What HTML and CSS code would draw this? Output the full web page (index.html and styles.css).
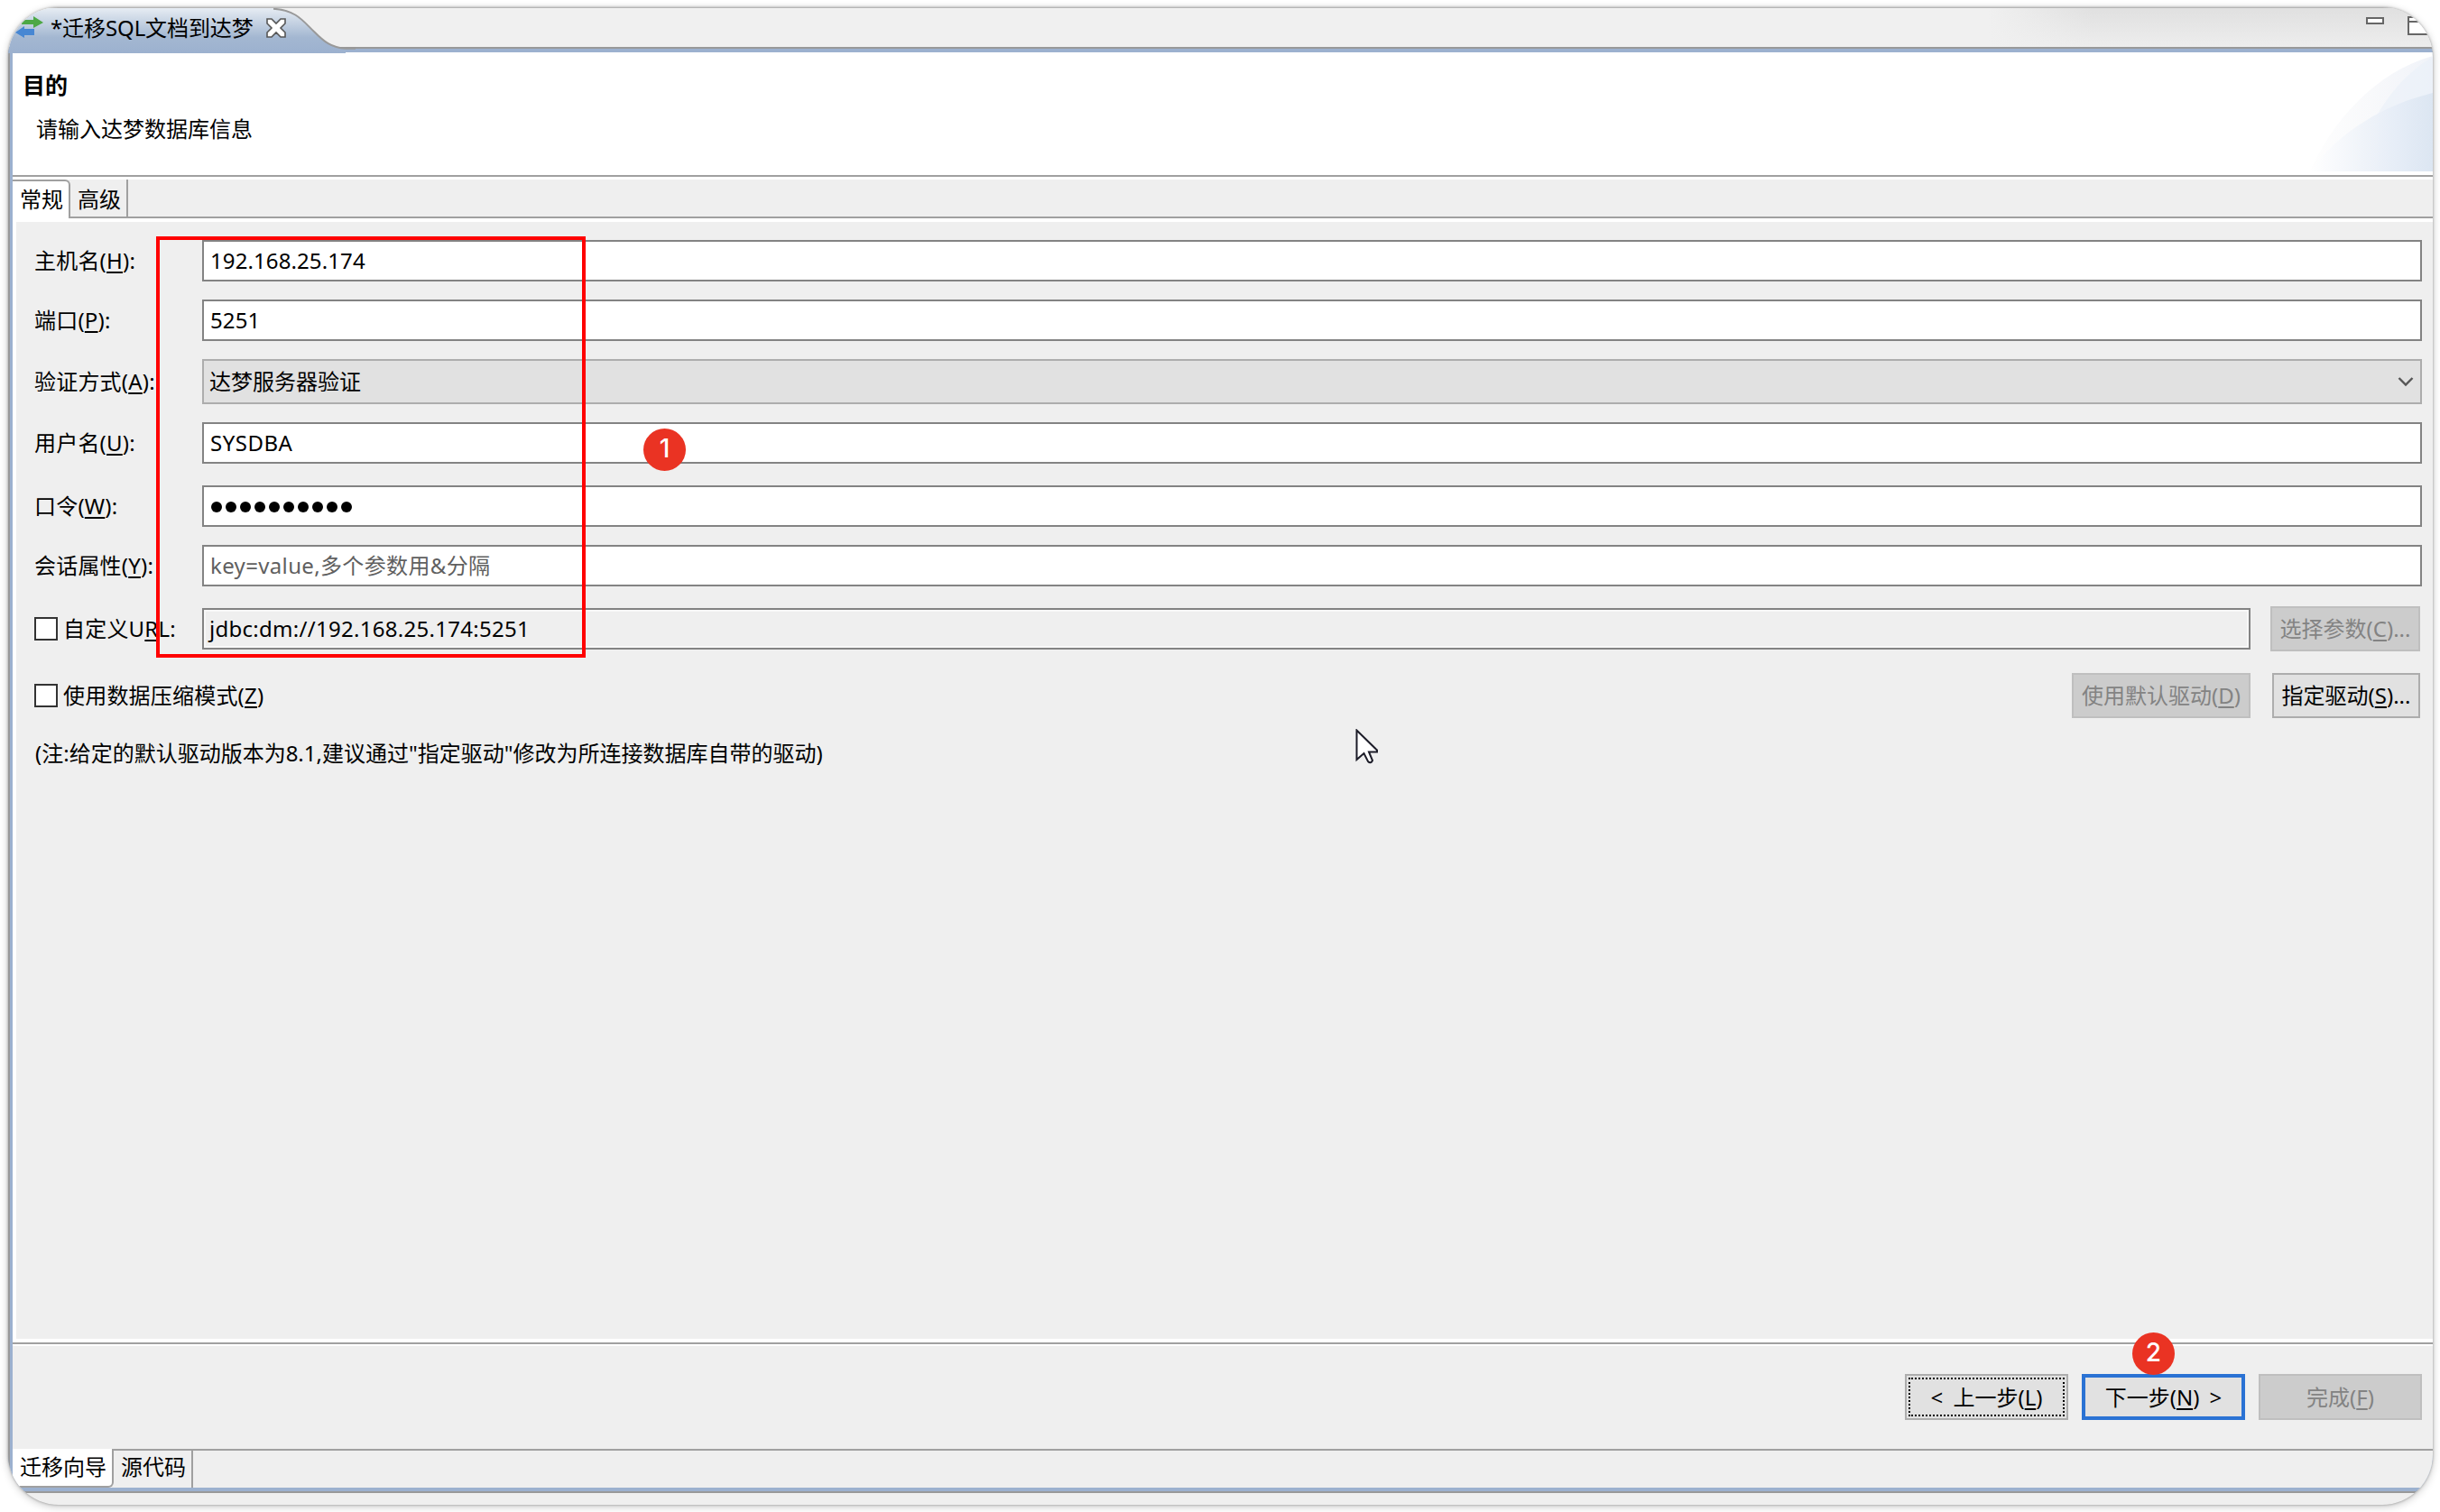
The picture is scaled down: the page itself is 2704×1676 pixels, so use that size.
FILE: index.html
```html
<!DOCTYPE html>
<html lang="zh-CN">
<head>
    <meta charset="UTF-8">
    <title>迁移SQL文档到达梦</title>
    <link rel="stylesheet" href="styles.css">
</head>
<body>
    <div class="window">
        <div class="titlebar">
            <svg class="tab-shape" width="385" height="50" viewBox="0 0 385 50">
                <defs>
                    <linearGradient id="tabFill" x1="0" y1="0" x2="0" y2="1">
                        <stop offset="0" stop-color="#e6ecf3"/>
                        <stop offset="0.65" stop-color="#a3b7d1"/>
                        <stop offset="1" stop-color="#9cb1cf"/>
                    </linearGradient>
                </defs>
                <path d="M0 0H296C320 2 328 16 339 26C350 37 358 44 374 45V50H0Z" fill="url(#tabFill)"/>
                <path d="M294 .8C320 2 328 16 339 26C350 37 358 44 374 44.8H385" fill="none" stroke="#999" stroke-width="2"/>
            </svg>
            <div class="tab-title">
                <svg width="32" height="26" viewBox="0 0 32 26">
                    <path d="M7 4H20V0L31 7L20 13V9H7Z" fill="#4da845"/>
                    <path d="M21 14H10V11L0 18L10 24V21H21Z" fill="#4787d3"/>
                </svg>
                <span>*迁移SQL文档到达梦</span>
                <svg class="close" width="22" height="22" viewBox="0 0 22 22">
                    <path d="M1 1H6L11 6L16 1H21V6L16 11L21 16V21H16L11 16L6 21H1V16L6 11L1 6Z" fill="#fff" stroke="#555" stroke-width="1.6"/>
                </svg>
            </div>
            <svg class="window-icons" width="86" height="24" viewBox="0 0 86 24">
                <rect x="2" y="2" width="18" height="6" fill="#fff" stroke="#666" stroke-width="2"/>
                <path d="M48 1H72V20H48ZM48 6H72" fill="#fff" stroke="#666" stroke-width="2"/>
            </svg>
        </div>

        <div class="view">
            <div class="header">
                <div>
                    <h1>目的</h1>
                    <p>请输入达梦数据库信息</p>
                </div>
                <svg class="banner" width="136" height="131" viewBox="0 0 136 131">
                    <defs>
                        <linearGradient id="g1">
                            <stop offset="0" stop-color="#fefefe"/>
                            <stop offset="0.5" stop-color="#f8f9fb"/>
                            <stop offset="1" stop-color="#f0f3f9"/>
                        </linearGradient>
                        <linearGradient id="g2">
                            <stop offset="0" stop-color="#fff"/>
                            <stop offset="0.45" stop-color="#eff3f9"/>
                            <stop offset="0.7" stop-color="#e6edf7"/>
                            <stop offset="1" stop-color="#dce6f2"/>
                        </linearGradient>
                    </defs>
                    <path d="M0 131C24 76 72 21 136 3V131Z" fill="url(#g1)"/>
                    <path d="M52 131C58 88 88 32 136 4V131Z" fill="#eaf0f8" opacity=".6"/>
                    <path d="M0 131C32 87 82 57 136 44V131Z" fill="url(#g2)"/>
                </svg>
            </div>

            <div class="tabs">
                <div class="tab active">常规</div>
                <div class="tab">高级</div>
            </div>

            <div class="panel">
                <div class="row">
                    <label>主机名(<u>H</u>):</label>
                    <div class="field">192.168.25.174</div>
                </div>
                <div class="row">
                    <label>端口(<u>P</u>):</label>
                    <div class="field">5251</div>
                </div>
                <div class="row">
                    <label>验证方式(<u>A</u>):</label>
                    <div class="field combo">
                        <span>达梦服务器验证</span>
                        <svg width="18" height="12" viewBox="0 0 18 12">
                            <path d="M1.500 2L9 9.500L16.500 2" fill="none" stroke="#555" stroke-width="2.400"/>
                        </svg>
                    </div>
                </div>
                <div class="row">
                    <label>用户名(<u>U</u>):</label>
                    <div class="field user">SYSDBA</div>
                </div>
                <div class="row password">
                    <label>口令(<u>W</u>):</label>
                    <div class="field dots">
                        <i></i><i></i><i></i><i></i><i></i><i></i><i></i><i></i><i></i><i></i>
                    </div>
                </div>
                <div class="row">
                    <label>会话属性(<u>Y</u>):</label>
                    <div class="field hint">key=value,多个参数用&amp;分隔</div>
                </div>
                <div class="row url">
                    <label><span class="check"></span>自定义U<u>R</u>L:</label>
                    <div class="field readonly">jdbc:dm://192.168.25.174:5251</div>
                    <div class="btn disabled params">选择参数(<u>C</u>)...</div>
                </div>
                <div class="row drivers">
                    <label><span class="check"></span>使用数据压缩模式(<u>Z</u>)</label>
                    <div class="btn disabled default-driver">使用默认驱动(<u>D</u>)</div>
                    <div class="btn pick-driver">指定驱动(<u>S</u>)...</div>
                </div>
                <p class="note">(注:给定的默认驱动版本为8.1,建议通过"指定驱动"修改为所连接数据库自带的驱动)</p>
            </div>

            <div class="footer">
                <div class="btn step focused">&lt; 上一步(<u>L</u>)</div>
                <div class="btn step primary">下一步(<u>N</u>) &gt;</div>
                <div class="btn step disabled">完成(<u>F</u>)</div>
            </div>

            <div class="tabs bottom-tabs">
                <div class="tab active">迁移向导</div>
                <div class="tab">源代码</div>
            </div>
        </div>
    </div>

    <!-- annotations on top of the window -->
    <div class="highlight"></div>
    <div class="badge badge-1">1</div>
    <div class="badge badge-2">2</div>
    <svg class="cursor" width="26" height="40" viewBox="0 0 26 40">
        <path d="M1.500 1.500V34L9.500 27L14 36Q17 39 19 35L15 25.500H24V23.500Z" fill="#fff" stroke="#1c1c28" stroke-width="2"/>
    </svg>
</body>
</html>
```
FILE: styles.css
```css
* {
    box-sizing: border-box;
}
body {
    margin: 0;
    padding: 8px 8px 8px 9px;
    width: 2704px;
    height: 1676px;
    overflow: hidden;
    position: relative;
    background: #fff;
    color: #000;
    font-family: "Noto Sans", "Noto Sans CJK SC", sans-serif;
    font-size: 24px;
    line-height: 32px;
}
h1, p {
    margin: 0;
}
u {
    text-decoration-thickness: 2px;
    text-underline-offset: 3px;
}
.window {
    height: 1660px;
    display: flex;
    flex-direction: column;
    overflow: hidden;
    border-radius: 56px;
    background: #efefef;
    box-shadow: 0 0 3px rgba(0, 0, 0, 0.35), 0 2px 10px rgba(0, 0, 0, 0.22);
}

/* editor tab strip */
.titlebar {
    position: relative;
    height: 46px;
    flex: none;
    display: flex;
    justify-content: space-between;
    border-top: 1px solid #b5b5b5;
    border-bottom: 2px solid #999;
    background: linear-gradient(90deg, #f0f0f0 2195px, rgba(240, 240, 240, 0) 2310px), linear-gradient(#e0e0e0, #ededed);
}
.tab-shape {
    position: absolute;
    left: 0;
    top: 0;
}
.tab-title {
    position: relative;
    display: flex;
    align-items: flex-start;
    padding: 6px 0 0 8px;
}
.tab-title > svg {
    margin-top: 3px;
}
.tab-title span {
    margin-left: 7px;
    letter-spacing: -0.1px;
}
.tab-title .close {
    margin: 5px 0 0 14px;
}
.window-icons {
    margin: 9px -11px 0 0;
}

/* blue frame around the view */
.view {
    height: 1599px;
    flex: none;
    display: flex;
    flex-direction: column;
    padding: 4px 0 4px 3px;
    border-left: 2px solid #999;
    background: #9cb1cf;
    box-shadow: 0 2px #999;
}
.header {
    height: 138px;
    flex: none;
    display: flex;
    justify-content: space-between;
    background: #fff;
    border-bottom: 2px solid #a0a0a0;
}
.header h1 {
    margin: 20px 0 0 11px;
    font-size: 25px;
    line-height: 32px;
}
.header p {
    margin: 17px 0 0 26px;
}
.banner {
    margin-top: 1px;
}
.tabs {
    height: 50px;
    flex: none;
    display: flex;
    background: #efefef;
    border-top: 3px solid #fff;
    border-bottom: 4px solid #fff;
    box-shadow: inset 0 -2px #a0a0a0;
}
.tab {
    padding: 6px 6px 0 8px;
    border-right: 2px solid #a0a0a0;
    height: 41px;
}
.tab.active {
    height: 43px;
    background: #fff;
    border-top: 2px solid #a0a0a0;
    border-top-right-radius: 6px;
    padding-top: 4px;
}

/* connection form */
.panel {
    height: 1242px;
    flex: none;
    display: flex;
    flex-direction: column;
    gap: 20px;
    padding: 20px 12px 0 20px;
    background: #efefef;
    border-left: 4px solid #fff;
    border-bottom: 4px solid #fff;
}
.row {
    display: flex;
    align-items: center;
}
.row label {
    width: 186px;
    flex: none;
    display: flex;
    align-items: center;
    white-space: nowrap;
    letter-spacing: 0.2px;
}
.field {
    flex: 1;
    height: 46px;
    display: flex;
    align-items: center;
    padding: 0 7px;
    background: #fff;
    border: 2px solid #838383;
    letter-spacing: 0.1px;
}
.combo {
    height: 50px;
    justify-content: space-between;
    background: #e1e1e1;
    border-color: #adadad;
    padding-left: 6px;
    letter-spacing: 0;
}
.user {
    letter-spacing: 0.5px;
}
.password {
    margin-top: 4px;
}
.dots {
    gap: 4px;
    padding-left: 8px;
}
.dots i {
    width: 12px;
    height: 12px;
    margin-top: 2px;
    border-radius: 50%;
    background: #000;
}
.hint {
    color: #606060;
    letter-spacing: 0.35px;
}
.readonly {
    background: #efefef;
    box-shadow: inset 0 0 0 2px #f8f8f8;
    padding-left: 6px;
    letter-spacing: 0.28px;
}
.check {
    width: 26px;
    height: 26px;
    margin-right: 6px;
    border: 2px solid #333;
    background: #fff;
}
.url {
    margin-top: 2px;
}
.drivers {
    margin-top: 4px;
}
.row.drivers label {
    flex: 1;
}
.btn {
    height: 50px;
    display: flex;
    align-items: center;
    justify-content: center;
    white-space: pre;
    background: #e1e1e1;
    border: 2px solid #adadad;
}
.disabled {
    background: #ccc;
    border-color: #bfbfbf;
    color: #838383;
}
.params {
    width: 166px;
    margin: 0 2px 0 22px;
}
.default-driver {
    width: 198px;
}
.pick-driver {
    width: 164px;
    margin: 0 2px 0 24px;
}
.note {
    margin-top: 3px;
    padding-left: 1px;
    white-space: nowrap;
}

/* wizard buttons */
.footer {
    height: 118px;
    flex: none;
    display: flex;
    justify-content: flex-end;
    gap: 15px;
    padding: 33px 12px 0 0;
    background: #efefef;
    border-top: 2px solid #a0a0a0;
    box-shadow: inset 0 2px #fff;
}
.step {
    width: 181px;
    height: 51px;
    word-spacing: 5px;
}
.focused {
    outline: 2px dotted #000;
    outline-offset: -6px;
}
.primary {
    border: 4px solid #2a72d4;
}
.bottom-tabs {
    height: 43px;
    border: none;
    box-shadow: inset 0 2px #a0a0a0;
}
.bottom-tabs .tab {
    height: 43px;
    padding-top: 4px;
}
.bottom-tabs .tab.active {
    border-top: none;
    border-bottom: 2px solid #a0a0a0;
    border-radius: 0 0 6px 0;
}

.highlight {
    position: absolute;
    left: 173px;
    top: 262px;
    width: 476px;
    height: 467px;
    border: 4px solid #f00;
}
.badge {
    position: absolute;
    width: 47px;
    height: 47px;
    border-radius: 50%;
    background: #ea3323;
    color: #fff;
    font: 500 28px/45px Inter, sans-serif;
    text-align: center;
}
.badge-1 {
    left: 713px;
    top: 475px;
}
.badge-2 {
    left: 2363px;
    top: 1477px;
}
.cursor {
    position: absolute;
    left: 1502px;
    top: 808px;
}
```
